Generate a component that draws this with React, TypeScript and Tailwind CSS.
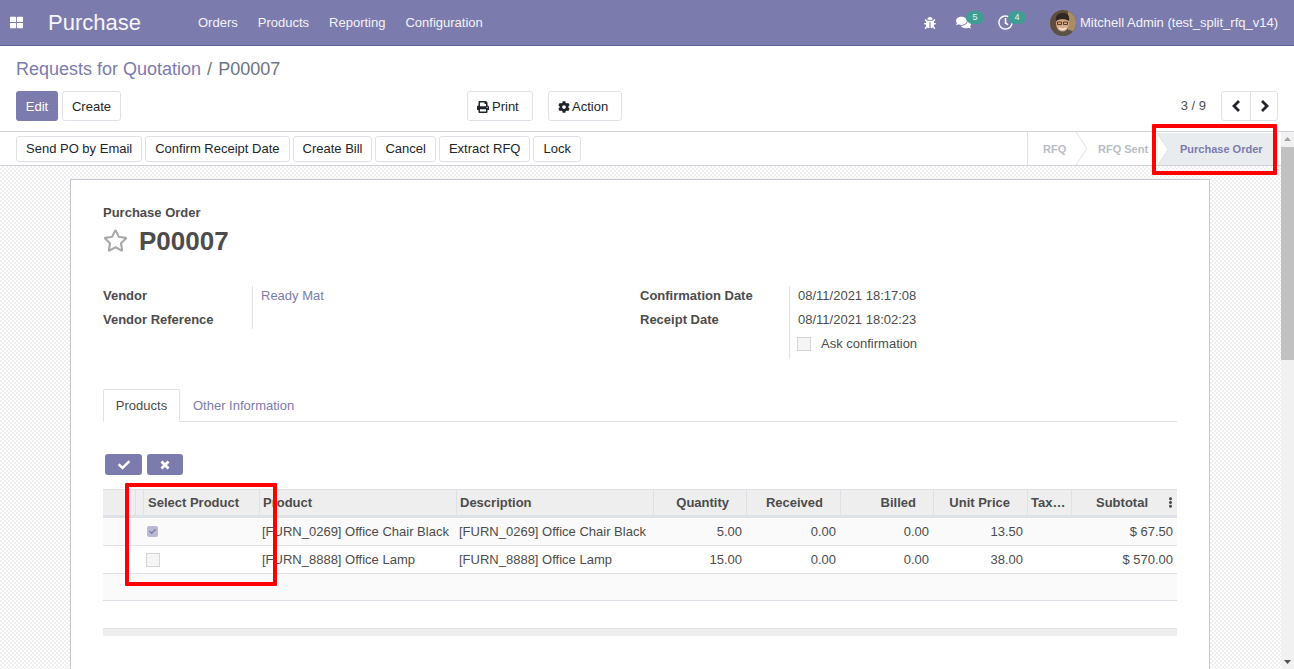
import React from 'react';
import { FaBug, FaCheck, FaCog, FaComments, FaEllipsisV, FaPrint, FaRegClock, FaRegStar, FaThLarge } from 'react-icons/fa';

const Btn = ({ children, className = '' }: { children: React.ReactNode; className?: string }) => (
  <button className={`h-[26px] px-[9px] bg-white border border-[#dee2e6] rounded-[3px] text-[13px] text-[#212529] whitespace-nowrap ${className}`}>
    {children}
  </button>
);

const Avatar = () => (
  <svg width="26" height="26" viewBox="0 0 26 26" className="rounded-full">
    <rect width="26" height="26" fill="#5f4c3b" />
    <rect x="18" width="8" height="26" fill="#a98d66" />
    <path d="M1 26c1-5 5-7 12-7s11 2 12 7z" fill="#5a5248" />
    <ellipse cx="12.5" cy="13.5" rx="6.5" ry="8" fill="#d7a985" />
    <path d="M6 11c-1-6 3-8 7-8s7 2 6 8c-3-2.500-10-2.500-13 0z" fill="#2f2720" />
    <path d="M7.500 12h4v2.500h-4zM13.500 12h4v2.500h-4z" fill="none" stroke="#2b2622" strokeWidth=".8" />
    <path d="M9 18c2 1.500 5 1.500 7 0" stroke="#fff" strokeWidth="1.200" fill="none" />
  </svg>
);

const Badge = ({ n }: { n: number }) => (
  <span className="absolute left-[10px] top-[-4px] h-[13px] w-[18px] rounded-full bg-[#3f9d94] text-[9px] leading-[13px] text-center text-white/90">
    {n}
  </span>
);

const FieldLabel = ({ children }: { children: React.ReactNode }) => (
  <div className="h-[19px] leading-[19px] font-bold text-[#4c4c4c]">{children}</div>
);

const columns = [
  { label: 'Product', w: 'w-[197px]', align: 'text-left pl-[3px]' },
  { label: 'Description', w: 'w-[197px]', align: 'text-left pl-[3px]' },
  { label: 'Quantity', w: 'w-[93px]', align: 'text-right pr-[17px]' },
  { label: 'Received', w: 'w-[94px]', align: 'text-right pr-[17px]' },
  { label: 'Billed', w: 'w-[93px]', align: 'text-right pr-[17px]' },
  { label: 'Unit Price', w: 'w-[94px]', align: 'text-right pr-[17px]' },
  { label: 'Tax…', w: 'w-[44px]', align: 'text-left pl-[3px]' },
];

const rows = [
  { checked: true, product: '[FURN_0269] Office Chair Black', qty: '5.00', price: '13.50', subtotal: '$ 67.50' },
  { checked: false, product: '[FURN_8888] Office Lamp', qty: '15.00', price: '38.00', subtotal: '$ 570.00' },
];

const cell = 'h-full overflow-hidden whitespace-nowrap';

export default function App() {
  return (
    <div className="relative h-[669px] w-[1294px] overflow-hidden bg-white text-[13px] text-[#4c4c4c] font-['Liberation_Sans',Arial,sans-serif] flex flex-col">
      <header className="h-[46px] shrink-0 bg-[#7c7bad] border-b border-[#5f5e97] text-white flex items-center">
        <FaThLarge className="ml-[10px] text-[13px]" />
        <span className="ml-[25px] text-[22px] leading-none w-[93px] text-[#f6f6fb]">Purchase</span>
        <nav className="ml-[57px] flex gap-5 text-[#f3f3f8]">
          <span>Orders</span>
          <span>Products</span>
          <span>Reporting</span>
          <span>Configuration</span>
        </nav>
        <div className="ml-auto flex items-center">
          <FaBug className="text-[12px] mr-5" />
          <span className="relative mr-[27px]"><FaComments className="text-[15px]" /><Badge n={5} /></span>
          <span className="relative mr-[37px]"><FaRegClock className="text-[15px]" /><Badge n={4} /></span>
          <Avatar />
          <span className="ml-[4px] mr-4 text-[#f3f3f8]">Mitchell Admin (test_split_rfq_v14)</span>
        </div>
      </header>

      <div className="h-[86px] shrink-0 px-4 border-b border-[#ced4da] flex flex-col">
        <div className="h-[45px] flex items-center pt-[2px] text-[18px]">
          <span className="text-[#7c7bad]">Requests for Quotation</span>
          <span className="mx-[6px] text-[#6c757d]">/</span>
          <span className="text-[#6c757d]">P00007</span>
        </div>
        <div className="flex items-start">
          <div className="flex gap-[4px] w-[451px]">
            <button className="h-[30px] w-[42px] pt-px rounded-[3px] bg-[#7c7bad] text-white">Edit</button>
            <button className="h-[30px] w-[59px] pt-px rounded-[3px] border border-[#dee2e6] text-[#212529]">Create</button>
          </div>
          <button className="h-[30px] w-[66px] pl-[9px] pt-px rounded-[3px] border border-[#dee2e6] text-[#212529] flex items-center gap-[3px]">
            <FaPrint className="text-[12px]" />Print
          </button>
          <button className="ml-[15px] h-[30px] w-[74px] pl-[9px] pt-px rounded-[3px] border border-[#dee2e6] text-[#212529] flex items-center gap-[2px]">
            <FaCog className="text-[12px]" />Action
          </button>
          <span className="ml-auto mr-[15px] leading-[30px] text-[#4c4c4c]">3 / 9</span>
          <div className="flex h-[30px] w-[57px] border border-[#dee2e6] rounded-[3px] text-[#212529]">
            <span className="w-[29px] flex items-center justify-center border-r border-[#dee2e6]">
              <svg width="9" height="12" viewBox="0 0 9 12"><path d="M7 1L2 6l5 5" fill="none" stroke="currentColor" strokeWidth="2.800" /></svg>
            </span>
            <span className="flex-1 flex items-center justify-center">
              <svg width="9" height="12" viewBox="0 0 9 12"><path d="M2 1l5 5-5 5" fill="none" stroke="currentColor" strokeWidth="2.800" /></svg>
            </span>
          </div>
        </div>
      </div>

      <div className="flex-1 min-h-0 flex">
        <div className="flex-1 min-w-0 flex flex-col">
          <div className="h-[34px] shrink-0 pl-4 pr-[3px] border-b border-[#d0d0da] flex items-center justify-between">
            <div className="flex gap-[3px]">
              <Btn>Send PO by Email</Btn>
              <Btn>Confirm Receipt Date</Btn>
              <Btn>Create Bill</Btn>
              <Btn>Cancel</Btn>
              <Btn>Extract RFQ</Btn>
              <Btn>Lock</Btn>
            </div>
            <div className="relative h-full flex items-center pt-px text-[11px] font-bold text-[#b9bdc4] border-l border-[#dee2e6]">
              <span className="w-[54px] pl-[15px]">RFQ</span>
              <span className="w-[75px] pl-[16px]">RFQ Sent</span>
              <span className="relative w-[121px] h-full -mt-px pl-[23px] leading-[33px] bg-[#e9ecef] text-[#7c7bad]">
                Purchase Order
                <svg width="12" height="33" viewBox="0 0 12 33" className="absolute left-0 top-0">
                  <path d="M0 0l11 16.500L0 33z" fill="#fff" stroke="#dee2e6" />
                </svg>
              </span>
              <svg width="12" height="33" viewBox="0 0 12 33" className="absolute left-[48px] top-0">
                <path d="M0 0l11 16.500L0 33" fill="none" stroke="#dee2e6" />
              </svg>
            </div>
          </div>

          <div className="flex-1 min-h-0 overflow-hidden px-[70px] pt-[13px] bg-[repeating-conic-gradient(#f0f0f0_0_25%,#ffffff_0_50%)] bg-[length:4px_4px]">
            <div className="w-[1140px] h-[600px] bg-white border border-[#c8c8d4] pl-8 pr-8 pt-[25px]">
              <div className="font-bold leading-[16px]">Purchase Order</div>
              <div className="mt-[2px] flex items-center h-[36px]">
                <FaRegStar className="mb-[2px] text-[25px] text-[#a8a8a8] shrink-0" />
                <span className="ml-[11px] text-[26px] font-bold text-[#4c4c4c]">P00007</span>
              </div>

              <div className="mt-[27px] flex h-[73px]">
                <div className="w-[537px] flex">
                  <div className="w-[150px] h-[43px] flex flex-col gap-[5px] border-r border-[#dee2e6]">
                    <FieldLabel>Vendor</FieldLabel>
                    <FieldLabel>Vendor Reference</FieldLabel>
                  </div>
                  <div className="pl-2 h-[19px] leading-[19px] text-[#7c7bad]">Ready Mat</div>
                </div>
                <div className="w-[150px] flex flex-col gap-[5px] border-r border-[#dee2e6]">
                  <FieldLabel>Confirmation Date</FieldLabel>
                  <FieldLabel>Receipt Date</FieldLabel>
                </div>
                <div className="pl-2 flex flex-col gap-[5px]">
                  <div className="h-[19px] leading-[19px]">08/11/2021 18:17:08</div>
                  <div className="h-[19px] leading-[19px]">08/11/2021 18:02:23</div>
                  <div className="h-[19px] flex items-center">
                    <span className="-ml-px w-[14px] h-[14px] bg-[#f5f5f5] border border-[#d4d4d4]" />
                    <span className="ml-[10px]">Ask confirmation</span>
                  </div>
                </div>
              </div>

              <div className="mt-[30px] h-[33px] flex border-b border-[#dee2e6]">
                <span className="w-[77px] h-[33px] bg-white border border-[#dee2e6] border-b-white rounded-t-[2px] text-center leading-[31px]">Products</span>
                <span className="ml-[13px] leading-[33px] text-[#7c7bad]">Other Information</span>
              </div>

              <div className="mt-[32px] ml-[2px] flex gap-[5px] text-white text-[12px]">
                <span className="h-[21px] w-[37px] rounded-[3px] bg-[#7c7bad] flex items-center justify-center"><FaCheck /></span>
                <span className="h-[21px] w-[36px] rounded-[3px] bg-[#7c7bad] flex items-center justify-center">
                  <svg width="10" height="10" viewBox="0 0 10 10"><path d="M1.500 1.500l7 7m0-7l-7 7" stroke="currentColor" strokeWidth="2.800" /></svg>
                </span>
              </div>

              <div className="mt-[14px] w-[1074px]">
                <div className="h-[29px] flex bg-[#eeeeee] border-y border-[#dee2e6] border-b-[3px] border-b-[#dee2e6] font-bold">
                  <span className="w-[33px] border-r border-[#dee2e6]" />
                  <span className="w-[8px] border-r border-[#dee2e6]" />
                  <span className={`${cell} w-[116px] pl-[4px] leading-[25px] border-r border-[#dee2e6]`}>Select Product</span>
                  {columns.map(c => (
                    <span key={c.label} className={`${cell} ${c.w} ${c.align} leading-[25px] border-r border-[#dee2e6]`}>{c.label}</span>
                  ))}
                  <span className={`${cell} flex-1 flex items-center justify-end pr-px gap-[17px]`}>
                    Subtotal
                    <FaEllipsisV className="text-[11px]" />
                  </span>
                </div>
                {rows.map((r, i) => (
                  <div key={r.product} className={`h-[28px] flex border-b border-[#dee2e6] ${i === 0 ? 'bg-[#fafafa]' : 'bg-white'}`}>
                    <span className="w-[41px]" />
                    <span className="w-[116px] flex items-center">
                      {r.checked ? (
                        <span className="ml-[3px] w-[11px] h-[11px] rounded-[2px] bg-[#b9b8d6] flex items-center justify-center text-[#7c7bad] text-[7px]"><FaCheck /></span>
                      ) : (
                        <span className="ml-[2px] w-[14px] h-[14px] bg-[#f5f5f5] border border-[#d4d4d4]" />
                      )}
                    </span>
                    <span className={`${cell} leading-[27px] w-[197px] pl-[2px]`}>{r.product}</span>
                    <span className={`${cell} leading-[27px] w-[197px] pl-[2px]`}>{r.product}</span>
                    <span className={`${cell} leading-[27px] w-[93px] text-right pr-[5px]`}>{r.qty}</span>
                    <span className={`${cell} leading-[27px] w-[94px] text-right pr-[5px]`}>0.00</span>
                    <span className={`${cell} leading-[27px] w-[93px] text-right pr-[5px]`}>0.00</span>
                    <span className={`${cell} leading-[27px] w-[94px] text-right pr-[5px]`}>{r.price}</span>
                    <span className={`${cell} w-[44px]`} />
                    <span className={`${cell} leading-[27px] flex-1 text-right pr-[4px]`}>{r.subtotal}</span>
                  </div>
                ))}
                <div className="h-[27px] bg-[#fafafa] border-b border-[#dee2e6]" />
                <div className="mt-[27px] h-[8px] bg-[#eeeeee] border-t border-[#e2e2e2]" />
              </div>
            </div>
          </div>
        </div>

        <div className="w-[13px] shrink-0 bg-[#f1f1f1] flex flex-col items-center">
          <svg width="9" height="15" viewBox="0 0 9 15" className="shrink-0"><path d="M1 9l3.500-4L8 9z" fill="#a3a3a3" /></svg>
          <div className="w-full h-[213px] bg-[#c1c1c1]" />
          <div className="flex-1" />
          <svg width="9" height="14" viewBox="0 0 9 14" className="shrink-0"><path d="M1 5l3.500 4L8 5z" fill="#505050" /></svg>
        </div>
      </div>

      {/* annotations on top of the screenshot */}
      <div className="absolute left-[1152px] top-[124px] w-[125px] h-[51px] border-[4px] border-[#ff0000] rounded-[1px]" />
      <div className="absolute left-[125px] top-[483px] w-[152px] h-[103px] border-[4px] border-[#ff0000] rounded-[1px]" />
    </div>
  );
}
